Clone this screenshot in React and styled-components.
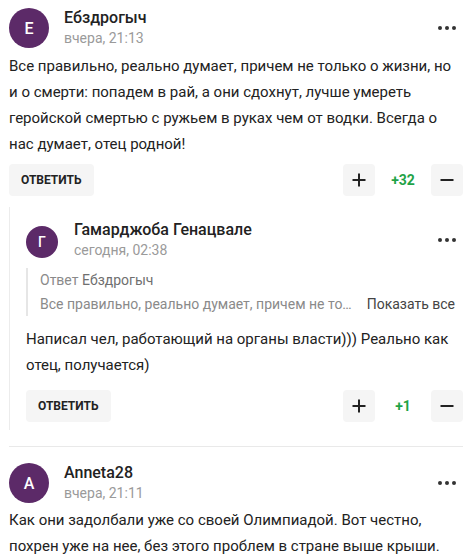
import React from "react";
import styled, { createGlobalStyle } from "styled-components";

const Global = createGlobalStyle`
  html, body { margin: 0; padding: 0; background: #fff; }
  body { font-family: Roboto, "Noto Sans", Arial, sans-serif; color: #222; }
  * { box-sizing: border-box; }
`;

const Page = styled.div`
  width: 471px;
  padding: 0 8px 0 9px;
  overflow: hidden;
`;

const Comment = styled.div`
  padding: ${(p) => (p.$first ? "8px 0 16px" : "16px 0 16px")};
  border-bottom: ${(p) => (p.$divider ? "1px solid #e9e9e9" : "none")};
`;

const Nested = styled.div`
  border-left: 1px solid #ececec;
  margin-top: 11px;
  padding: 13px 0 8px 16px;
`;

const Header = styled.div`
  display: flex;
  align-items: flex-start;
  gap: ${(p) => (p.$small ? 16 : 15)}px;
`;

const Avatar = styled.div`
  width: ${(p) => p.$size}px;
  height: ${(p) => p.$size}px;
  border-radius: 50%;
  background: #5c2a68;
  color: #fff;
  display: flex;
  align-items: center;
  justify-content: center;
  font-size: ${(p) => (p.$size > 35 ? 16 : 14)}px;
  font-weight: 500;
  flex-shrink: 0;
  margin-top: ${(p) => p.$offset || 0}px;
`;

const Meta = styled.div`
  flex: 1;
  display: flex;
  flex-direction: column;
`;

const Name = styled.div`
  font-size: 16px;
  font-weight: 500;
  line-height: 20px;
  color: #222;
`;

const DateText = styled.div`
  font-size: 14px;
  line-height: 20px;
  color: #9a9a9a;
`;

const Dots = styled.div`
  align-self: center;
  display: flex;
  gap: 3px;
  padding: 0 7px 0 0;
  span {
    width: 4px;
    height: 4px;
    border-radius: 50%;
    background: #333;
  }
`;

const Body = styled.div`
  font-size: 15px;
  line-height: 26px;
  color: #222;
  margin: ${(p) => p.$mt}px 0 ${(p) => p.$mb}px;
`;

const Actions = styled.div`
  display: flex;
  align-items: center;
`;

const ReplyButton = styled.button`
  height: 32px;
  padding: 0 12px;
  border: none;
  border-radius: 4px;
  background: #f5f5f5;
  font-family: inherit;
  font-size: 12px;
  font-weight: 700;
  color: #222;
  text-transform: uppercase;
  cursor: pointer;
`;

const Spacer = styled.div`
  flex: 1;
`;

const VoteButton = styled.button`
  width: 32px;
  height: 32px;
  border: none;
  border-radius: 4px;
  background: #f5f5f5;
  display: flex;
  align-items: center;
  justify-content: center;
  padding: 0;
  cursor: pointer;
`;

const Score = styled.div`
  width: 56px;
  text-align: center;
  font-size: 14px;
  font-weight: 700;
  color: #1fa347;
`;

const Quote = styled.div`
  border-left: 2px solid #e6e6e6;
  padding: 0 8px 0 12px;
  margin-top: 8px;
  font-size: 14px;
  line-height: 24px;
  color: #8a8a8a;
`;

const QuoteName = styled.span`
  color: #6f6f6f;
`;

const QuoteRow = styled.div`
  display: flex;
  align-items: center;
  gap: 14px;
`;

const QuoteText = styled.div`
  flex: 1;
  min-width: 0;
  white-space: nowrap;
  overflow: hidden;
  text-overflow: ellipsis;
`;

const ShowAll = styled.div`
  color: #444;
  white-space: nowrap;
`;

const Plus = () => (
  <svg width="14" height="14" viewBox="0 0 14 14">
    <path d="M7 0.5v13M0.5 7h13" stroke="#222" strokeWidth="2" fill="none" />
  </svg>
);

const Minus = () => (
  <svg width="14" height="14" viewBox="0 0 14 14">
    <path d="M0.5 7h13" stroke="#222" strokeWidth="2" fill="none" />
  </svg>
);

const More = () => (
  <Dots>
    <span />
    <span />
    <span />
  </Dots>
);

const ActionRow = ({ score }) => (
  <Actions>
    <ReplyButton>Ответить</ReplyButton>
    <Spacer />
    <VoteButton aria-label="plus">
      <Plus />
    </VoteButton>
    <Score>{score}</Score>
    <VoteButton aria-label="minus">
      <Minus />
    </VoteButton>
  </Actions>
);

export default function App() {
  return (
    <Page>
      <Global />
      <Comment $first $divider>
        <Header>
          <Avatar $size={40}>Е</Avatar>
          <Meta>
            <Name>Ебздрогыч</Name>
            <DateText>вчера, 21:13</DateText>
          </Meta>
          <More />
        </Header>
        <Body $mt={5} $mb={7}>
          Все правильно, реально думает, причем не только о жизни, но и о
          смерти: попадем в рай, а они сдохнут, лучше умереть геройской
          смертью с ружьем в руках чем от водки. Всегда о нас думает, отец
          родной!
        </Body>
        <ActionRow score="+32" />
        <Nested>
          <Header $small>
            <Avatar $size={32} $offset={6}>Г</Avatar>
            <Meta>
              <Name>Гамарджоба Генацвале</Name>
              <DateText>сегодня, 02:38</DateText>
            </Meta>
            <More />
          </Header>
          <Quote>
            <div>
              Ответ <QuoteName>Ебздрогыч</QuoteName>
            </div>
            <QuoteRow>
              <QuoteText>
                Все правильно, реально думает, причем не только о жизни, но и о
                смерти
              </QuoteText>
              <ShowAll>Показать все</ShowAll>
            </QuoteRow>
          </Quote>
          <Body $mt={10} $mb={12}>
            Написал чел, работающий на органы власти))) Реально как отец,
            получается)
          </Body>
          <ActionRow score="+1" />
        </Nested>
      </Comment>
      <Comment>
        <Header>
          <Avatar $size={40}>А</Avatar>
          <Meta>
            <Name>Anneta28</Name>
            <DateText>вчера, 21:11</DateText>
          </Meta>
          <More />
        </Header>
        <Body $mt={4} $mb={0}>
          Как они задолбали уже со своей Олимпиадой. Вот честно, похрен уже на
          нее, без этого проблем в стране выше крыши.
        </Body>
      </Comment>
    </Page>
  );
}
